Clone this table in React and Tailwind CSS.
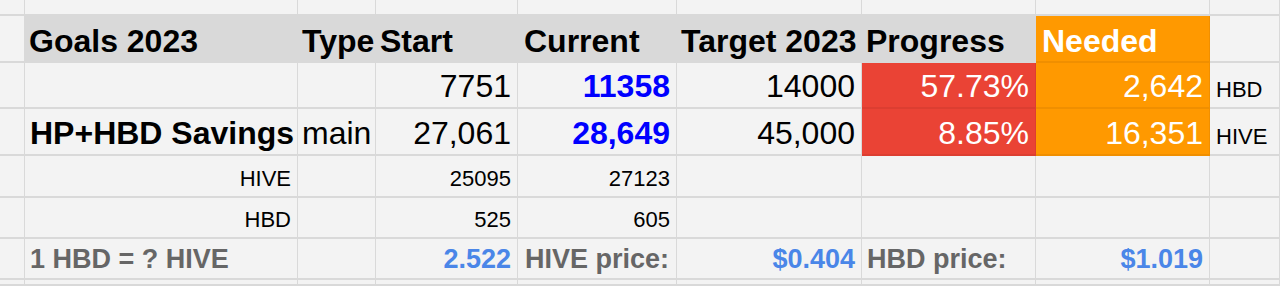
import React from "react";

const COLS = "grid-cols-[25px_273px_78px_142px_159px_185px_174px_174px_70px]";
const ROWS = "grid-rows-[16px_47px_46px_47px_42px_41px_41px_6px]";

// one spreadsheet cell
const Cell = ({ children, className = "" }) => (
    <div
        className={`flex items-end overflow-visible whitespace-nowrap border-r border-b-2 border-[#d9d9d9] leading-none ${className}`}
    >
        {children}
    </div>
);

const head = "bg-[#d9d9d9] border-[#cdcdcd] text-[32px] font-bold text-black pl-[4px] pb-[4px]";
const big = "text-[32px] text-black pb-[5px]";
const right = "justify-end pr-[6px]";
const blue = "text-[32px] font-bold text-[#0000ff] pb-[5px]";
const red = "bg-[#ea4335] border-[#dc3e31] text-[32px] text-white pb-[5px]";
const orange = "bg-[#ff9900] border-[#f08f00] text-[32px] text-white pb-[5px]";
const small = "text-[22px] text-black pb-[6px]";
const grey = "text-[27px] font-bold text-[#666666] pl-[5px] pb-[5px]";
const light = "text-[27px] font-bold text-[#4a86e8] pb-[5px] justify-end pr-[6px]";

export default function App() {
    return (
        <div
            className="h-[286px] w-[1280px] overflow-hidden bg-[#f3f3f3]"
            style={{ fontFamily: '"Liberation Sans", Arial, sans-serif' }}
        >
            <div className={`grid ${COLS} ${ROWS}`}>
                {/* top partial row */}
                {Array.from({ length: 9 }).map((_, i) => (
                    <Cell key={`t${i}`} />
                ))}

                {/* header */}
                <Cell />
                <Cell className={head}>Goals 2023</Cell>
                <Cell className={head}>Type</Cell>
                <Cell className={head}>Start</Cell>
                <Cell className={`${head} pl-[6px]`}>Current</Cell>
                <Cell className={head}>Target 2023</Cell>
                <Cell className={head}>Progress</Cell>
                <Cell className="bg-[#ff9900] border-[#f08f00] text-[32px] font-bold text-white pl-[6px] pb-[4px]">
                    Needed
                </Cell>
                <Cell />

                {/* HBD row */}
                <Cell />
                <Cell />
                <Cell />
                <Cell className={`${big} ${right}`}>7751</Cell>
                <Cell className={`${blue} ${right}`}>11358</Cell>
                <Cell className={`${big} ${right}`}>14000</Cell>
                <Cell className={`${red} ${right}`}>57.73%</Cell>
                <Cell className={`${orange} ${right}`}>2,642</Cell>
                <Cell className={`${small} pl-[6px]`}>HBD</Cell>

                {/* savings row */}
                <Cell />
                <Cell className="text-[32px] font-bold text-black pl-[5px] pb-[5px]">HP+HBD Savings</Cell>
                <Cell className={`${big} pl-[4px]`}>main</Cell>
                <Cell className={`${big} ${right}`}>27,061</Cell>
                <Cell className={`${blue} ${right}`}>28,649</Cell>
                <Cell className={`${big} ${right}`}>45,000</Cell>
                <Cell className={`${red} ${right}`}>8.85%</Cell>
                <Cell className={`${orange} ${right}`}>16,351</Cell>
                <Cell className={`${small} pl-[6px]`}>HIVE</Cell>

                {/* HIVE breakdown */}
                <Cell />
                <Cell className={`${small} ${right}`}>HIVE</Cell>
                <Cell />
                <Cell className={`${small} ${right}`}>25095</Cell>
                <Cell className={`${small} ${right}`}>27123</Cell>
                <Cell />
                <Cell />
                <Cell />
                <Cell />

                {/* HBD breakdown */}
                <Cell />
                <Cell className={`${small} ${right}`}>HBD</Cell>
                <Cell />
                <Cell className={`${small} ${right}`}>525</Cell>
                <Cell className={`${small} ${right}`}>605</Cell>
                <Cell />
                <Cell />
                <Cell />
                <Cell />

                {/* prices */}
                <Cell />
                <Cell className={grey}>1 HBD = ? HIVE</Cell>
                <Cell />
                <Cell className={light}>2.522</Cell>
                <Cell className={`${grey} pl-[7px]`}>HIVE price:</Cell>
                <Cell className={light}>$0.404</Cell>
                <Cell className={grey}>HBD price:</Cell>
                <Cell className={light}>$1.019</Cell>
                <Cell />

                {/* bottom partial row */}
                {Array.from({ length: 9 }).map((_, i) => (
                    <Cell key={`b${i}`} />
                ))}
            </div>
        </div>
    );
}
